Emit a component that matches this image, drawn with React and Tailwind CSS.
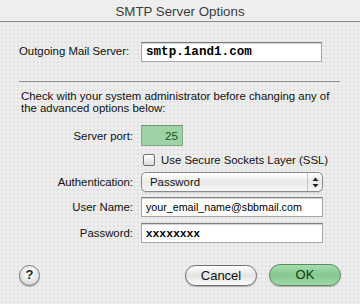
import React from "react";

const ui = { fontFamily: '"Liberation Sans", Arial, sans-serif' };

const TextField = ({ children, className = "" }) => (
    <div className={`h-[20px] bg-white border border-[#a8a8a8] border-t-[#7c7c7c] shadow-[inset_0_1px_1px_rgba(0,0,0,0.18)] flex items-center px-[4px] ${className}`}>
        {children}
    </div>
);

const PopupArrows = () => (
    <svg width="7" height="11" viewBox="0 0 7 11">
        <path d="M3.5 0.5 L6.5 4 L0.5 4 Z" fill="#222" />
        <path d="M3.5 10.5 L6.5 7 L0.5 7 Z" fill="#222" />
    </svg>
);

const App = () => {
    return (
        <div className="w-[360px] h-[304px] bg-black overflow-hidden" style={ui}>
            <div className="h-full rounded-t-[6px] bg-[#ededed] bg-[radial-gradient(circle,#d9d9d9_0.6px,transparent_0.9px)] bg-size-[4px_4px] flex flex-col text-[#111]">
                {/* title bar */}
                <div className="h-[22px] border-b border-[#8a8a8a] bg-[#eeeeee] flex items-center justify-center pt-[2px] text-[13.3px] text-[#3c3c3c]">
                    SMTP Server Options
                </div>

                <div className="px-[19px]">
                    {/* outgoing server */}
                    <div className="mt-[20px] flex items-center">
                        <span className="w-[122px] text-[11.4px]">Outgoing Mail Server:</span>
                        <TextField className="w-[181px]">
                            <span className="font-bold text-[12.6px] text-black" style={{ fontFamily: '"Liberation Mono", "Courier New", monospace' }}>
                                smtp.1and1.com
                            </span>
                        </TextField>
                    </div>

                    <div className="mt-[19px] h-px w-[321px] bg-[#8f8f8f]" />

                    <p className="mt-[8px] ml-[2px] text-[11.4px] leading-[12px]">
                        Check with your system administrator before changing any of
                        <br />
                        the advanced options below:
                    </p>

                    <div className="mt-[11px] grid grid-cols-[114px_auto] gap-x-[8px] items-center text-[11.4px] leading-[14px]">
                        <span className="text-right">Server port:</span>
                        <div className="w-[42px] h-[21px] bg-[#9ed3a5] border border-[#84a886] border-t-[#6f8f71] flex items-center justify-end pr-[4px] text-[#1f4d24] text-[11.6px]">
                            25
                        </div>

                        <span />
                        <div className="mt-[7px] flex items-center">
                            <div className="ml-[2px] w-[12px] h-[12px] rounded-[2px] border border-[#6f6f6f] bg-linear-to-b from-[#ffffff] to-[#dedede]" />
                            <span className="ml-[6px]">Use Secure Sockets Layer (SSL)</span>
                        </div>

                        <span className="mt-[5px] text-right">Authentication:</span>
                        <div className="mt-[5px] w-[182px] h-[20px] rounded-[5px] border border-[#8a8a8a] bg-linear-to-b from-[#ffffff] via-[#e9e9e9] to-[#f7f7f7] flex items-center shadow-[0_1px_1px_rgba(0,0,0,0.12)]">
                            <span className="flex-1 pl-[8px]">Password</span>
                            <div className="h-full w-[15px] border-l border-[#c4c4c4] flex items-center justify-center">
                                <PopupArrows />
                            </div>
                        </div>

                        <span className="mt-[5px] text-right">User Name:</span>
                        <TextField className="mt-[5px] w-[182px]">
                            <span className="text-[10.7px] text-black">your_email_name@sbbmail.com</span>
                        </TextField>

                        <span className="mt-[6px] text-right">Password:</span>
                        <TextField className="mt-[6px] w-[182px] h-[19px]">
                            <span className="font-bold text-[11.5px] tracking-[0.4px] text-black">xxxxxxxx</span>
                        </TextField>
                    </div>

                    {/* buttons */}
                    <div className="mt-[21px] flex items-center">
                        <div className="w-[21px] h-[21px] rounded-full border border-[#7d7d7d] bg-[radial-gradient(circle_at_50%_35%,#ffffff,#e4e4e4_60%,#bdbdbd)] shadow-[0_1px_1px_rgba(0,0,0,0.25)] flex items-center justify-center text-[13px] font-bold text-[#222]">
                            ?
                        </div>
                        <div className="flex-1" />
                        <button className="w-[72px] h-[21px] rounded-full border border-[#6e6e6e] bg-linear-to-b from-[#ffffff] via-[#e4e4e4] to-[#fbfbfb] shadow-[0_1px_1px_rgba(0,0,0,0.25)] text-[13px] text-[#111]">
                            Cancel
                        </button>
                        <button className="ml-[12px] w-[72px] h-[22px] rounded-[11px] border border-[#5b8a62] bg-linear-to-b from-[#a5dcad] via-[#85c890] to-[#9fd8a8] shadow-[0_1px_1px_rgba(0,0,0,0.25)] text-[13px] text-[#103a16]">
                            OK
                        </button>
                    </div>
                </div>
            </div>
        </div>
    );
};

export default App;
